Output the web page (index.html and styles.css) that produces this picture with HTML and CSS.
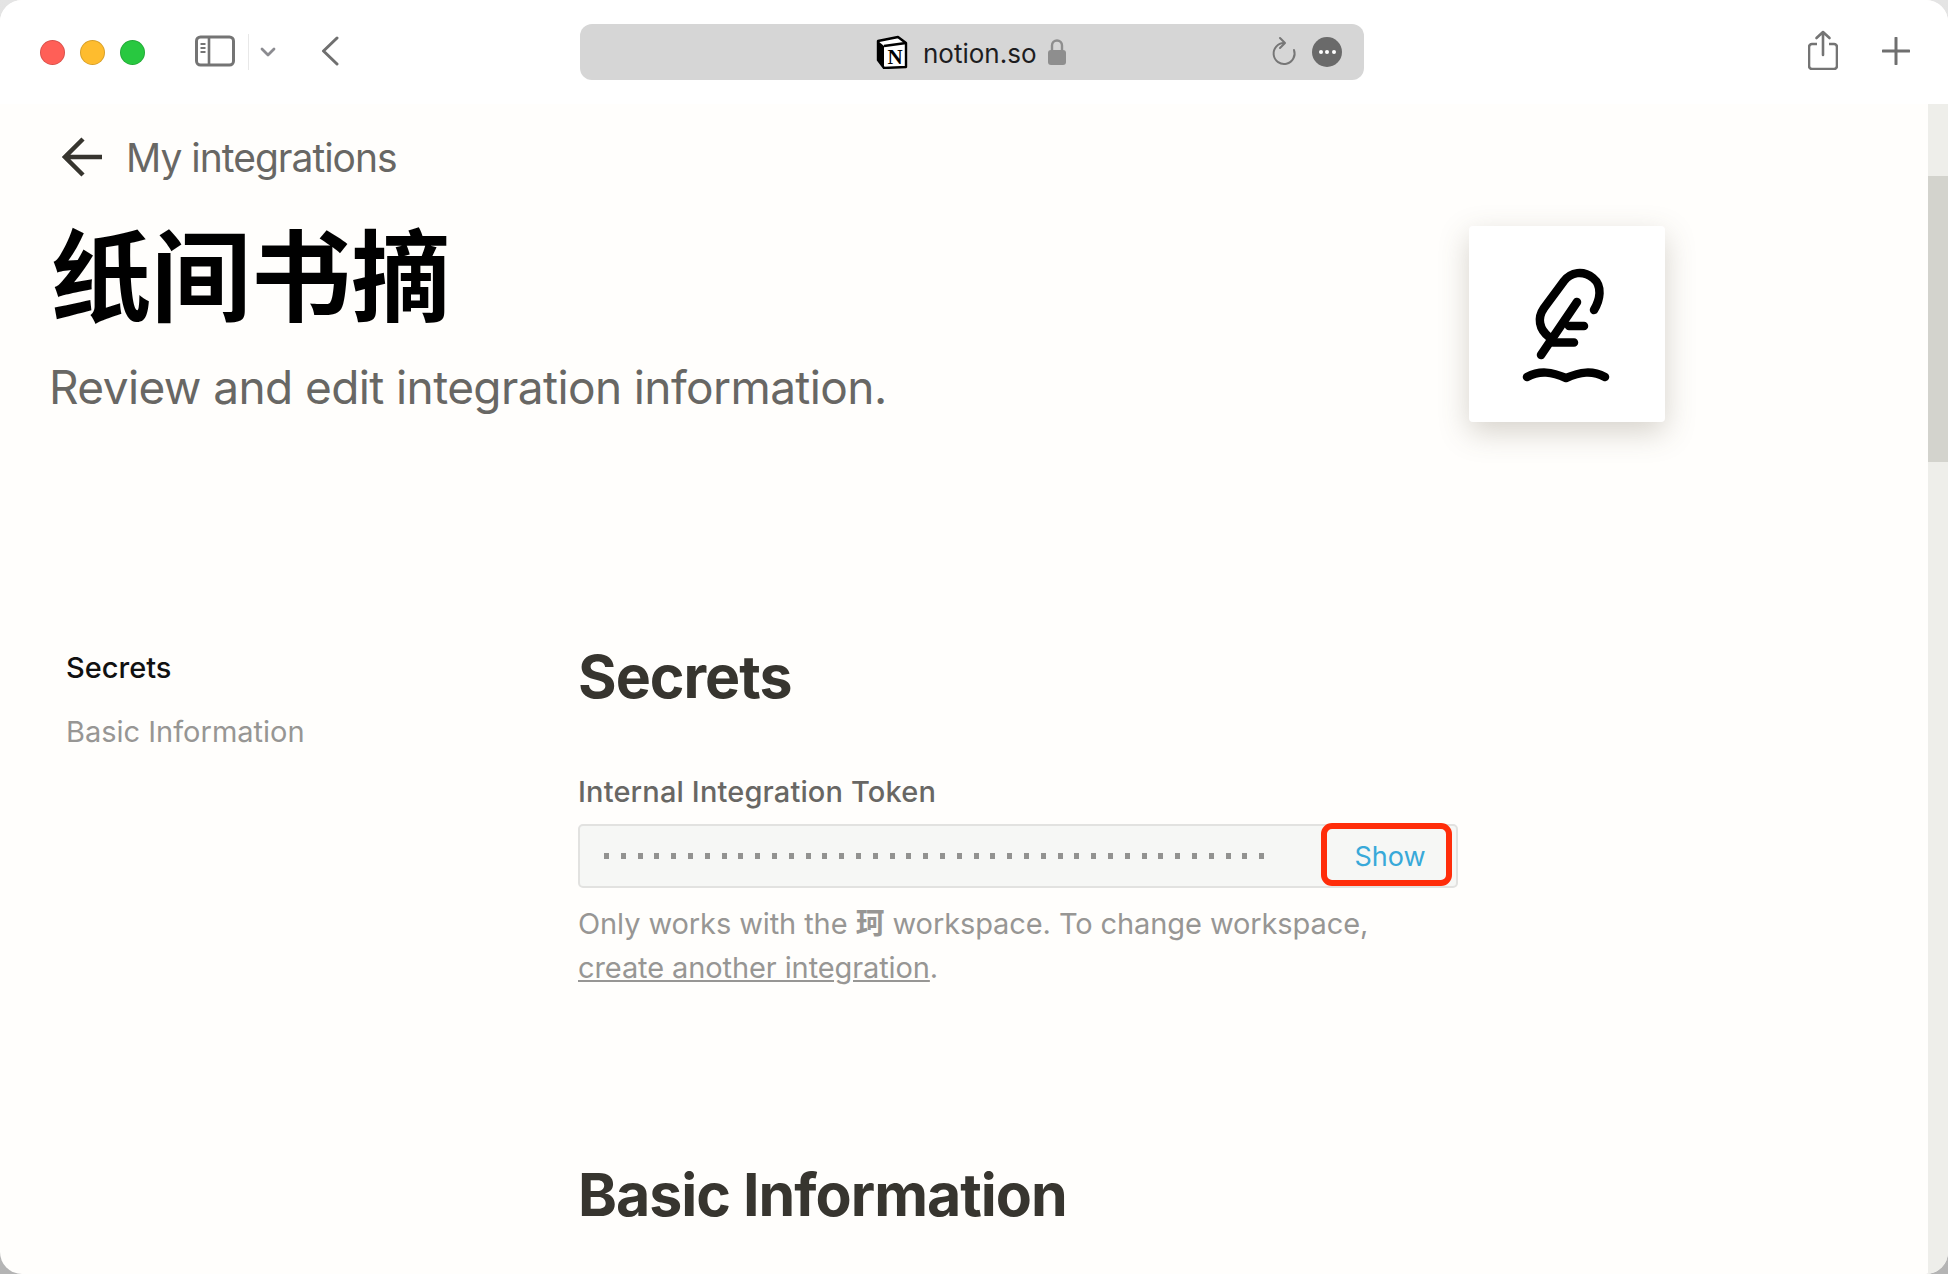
FILE: index.html
```html
<!DOCTYPE html>
<html lang="en">
<head>
  <meta charset="UTF-8" />
  <title>纸间书摘 - notion.so</title>
  <link rel="stylesheet" href="styles.css">
</head>
<body>
  <div class="window">
    <header class="toolbar">
      <div class="lights">
        <span class="light red"></span>
        <span class="light yellow"></span>
        <span class="light green"></span>
      </div>
      <svg class="sidebar-icon" viewBox="0 0 40 32" width="40" height="32">
        <rect x="1.500" y="2" width="37" height="28" rx="4" fill="none" stroke="#747474" stroke-width="3"/>
        <path d="M14 2v28" stroke="#747474" stroke-width="2.600"/>
        <path d="M5.500 9h5M5.500 13h5M5.500 17h5" stroke="#747474" stroke-width="2"/>
      </svg>
      <span class="divider"></span>
      <svg class="chevron-icon" viewBox="0 0 16 10" width="16" height="10">
        <path d="M2 2l6 6 6-6" fill="none" stroke="#8b8b90" stroke-width="2.800" stroke-linecap="round" stroke-linejoin="round"/>
      </svg>
      <svg class="back-icon" viewBox="0 0 18 30" width="18" height="30">
        <path d="M16 2L2.500 15 16 28" fill="none" stroke="#6f6f6f" stroke-width="3" stroke-linecap="round" stroke-linejoin="round"/>
      </svg>

      <div class="url-bar">
        <div class="url-center">
          <svg class="notion-logo" viewBox="0 0 32 34" width="32" height="34">
            <path d="M2 6l20-4 8 6v24l-22 1-6-8z" fill="#fff" stroke="#000" stroke-width="2.400" stroke-linejoin="round"/>
            <path d="M2 6l6 5v22l-6-8z" fill="#000"/>
            <path d="M8 11l22-3" stroke="#000" stroke-width="2.400"/>
            <text x="19" y="29" class="notion-n">N</text>
          </svg>
          <span class="url-text">notion.so</span>
          <svg class="lock-icon" viewBox="0 0 20 28" width="20" height="28">
            <path d="M5 13V7.500a5 5 0 0 1 10 0V13" fill="none" stroke="#8e8e8e" stroke-width="2.400"/>
            <rect x="1" y="12" width="18" height="15" rx="3" fill="#8e8e8e"/>
          </svg>
        </div>
        <svg class="reload-icon" viewBox="0 0 26 32" width="26" height="32">
          <path d="M13 7a10.500 10.500 0 1 0 10 7" fill="none" stroke="#767676" stroke-width="2" stroke-linecap="round"/>
          <path d="M9 2l5 5-5 5" fill="none" stroke="#767676" stroke-width="2" stroke-linecap="round" stroke-linejoin="round"/>
        </svg>
        <span class="more-btn"><i></i><i></i><i></i></span>
      </div>

      <svg class="share-icon" viewBox="0 0 30 40" width="30" height="40">
        <path d="M9 14H4a3 3 0 0 0-3 3v19a3 3 0 0 0 3 3h22a3 3 0 0 0 3-3V17a3 3 0 0 0-3-3h-5" fill="none" stroke="#747474" stroke-width="2.600"/>
        <path d="M15 25V2M8.500 8L15 2l6.500 6" fill="none" stroke="#747474" stroke-width="2.600" stroke-linecap="round" stroke-linejoin="round"/>
      </svg>
      <svg class="plus-icon" viewBox="0 0 28 28" width="28" height="28">
        <path d="M14 1v26M1 14h26" stroke="#6f6f6f" stroke-width="3" stroke-linecap="round"/>
      </svg>
    </header>

    <div class="page">
      <main class="content">
        <a class="back-link" href="#">
          <svg viewBox="0 0 42 42" width="42" height="42">
            <path d="M40 21H4M21 3L3 21l18 18" fill="none" stroke="#37352f" stroke-width="4.500"/>
          </svg>
          <span>My integrations</span>
        </a>

        <div class="hero">
          <div class="hero-text">
            <h1>纸间书摘</h1>
            <p>Review and edit integration information.</p>
          </div>
          <div class="app-icon">
            <svg viewBox="0 0 196 196" width="196" height="196">
              <g fill="none" stroke="#000" stroke-width="8.500" stroke-linecap="round" stroke-linejoin="round">
                <path d="M125 84C131 74 134 60 124 52C114 44 102 46 95 55L75 82C68 92 70 103 80 111"/>
                <path d="M108 76L72 129"/>
                <path d="M100 100H115M84 116.500H105"/>
                <path d="M58 151C71 144 83 146 97 152C111 146 123 144 136 151"/>
              </g>
            </svg>
          </div>
        </div>

        <div class="columns">
          <nav class="side-nav">
            <a class="active" href="#">Secrets</a>
            <a href="#">Basic Information</a>
          </nav>
          <div class="sections">
            <section class="secrets">
              <h2>Secrets</h2>
              <label>Internal Integration Token</label>
              <div class="token-field">
                <div class="token-dots"></div>
                <button class="show-btn">Show</button>
              </div>
              <p class="hint">Only works with the <b class="cjk">珂</b> workspace. To change workspace,<br><a href="#">create another integration</a>.</p>
            </section>
            <section>
              <h2>Basic Information</h2>
            </section>
          </div>
        </div>
      </main>
      <div class="scrollbar"><div class="thumb"></div></div>
    </div>
  </div>
</body>
</html>
```

FILE: styles.css
```css
:root {
  --page-bg: #fffefc;
  --text-dark: #37352f;
  --text-mid: #686764;
  --text-light: #979694;
}

* {
  margin: 0;
  padding: 0;
  box-sizing: border-box;
}

html, body {
  height: 100%;
  overflow: hidden;
}

body {
  font-family: Inter, "Noto Sans CJK SC", sans-serif;
  background: linear-gradient(#e4e4e4, #b4b4b4);
  color: var(--text-dark);
}

a {
  color: inherit;
}

.window {
  height: 100%;
  display: flex;
  flex-direction: column;
  background-color: var(--page-bg);
  border-radius: 22px;
  overflow: hidden;
}

/* Barre du navigateur */
.toolbar {
  height: 104px;
  flex-shrink: 0;
  display: flex;
  align-items: center;
  background-color: #fff;
  padding-left: 39.500px;
}

.lights {
  display: flex;
  gap: 15px;
}

.light {
  width: 25px;
  height: 25px;
  border-radius: 50%;
  border: 1px solid rgba(0, 0, 0, 0.15);
}

.red { background-color: #ff5f57; }
.yellow { background-color: #febc2e; }
.green { background-color: #28c840; }

.sidebar-icon {
  margin-left: 50.500px;
  margin-top: -2px;
}

.divider {
  width: 1px;
  height: 36px;
  margin-left: 13px;
  background-color: #e8e8e8;
}

.chevron-icon {
  margin-left: 11px;
}

.back-icon {
  margin-left: 45px;
  margin-top: -2px;
}

.url-bar {
  width: 784px;
  height: 56px;
  margin-left: 241px;
  display: flex;
  align-items: center;
  position: relative;
  background-color: #d6d6d6;
  border-radius: 12px;
}

.url-center {
  display: flex;
  align-items: center;
  margin-left: 296px;
}

.notion-n {
  font-family: "Liberation Serif", serif;
  font-size: 21px;
  font-weight: bold;
  text-anchor: middle;
}

.url-text {
  font-size: 26px;
  line-height: 30px;
  padding-top: 4px;
  color: #1d1d1f;
  margin-left: 15px;
}

.lock-icon {
  margin-left: 10px;
}

.reload-icon {
  margin-left: auto;
}

.more-btn {
  width: 30px;
  height: 30px;
  margin: 0 22px 0 15px;
  display: flex;
  align-items: center;
  justify-content: center;
  gap: 2.500px;
  border-radius: 50%;
  background-color: #6a6a6a;
}

.more-btn i {
  width: 4px;
  height: 4px;
  border-radius: 50%;
  background-color: #fff;
}

.share-icon {
  margin-left: 444px;
  margin-top: -4px;
}

.plus-icon {
  margin-left: 44px;
  margin-top: -2px;
}

/* Contenu */
.page {
  flex: 1;
  display: flex;
  min-height: 0;
}

.content {
  flex: 1;
  padding: 29px 0 0 50px;
  overflow: hidden;
}

.scrollbar {
  width: 20px;
  padding-top: 72px;
  background-color: #eeeeea;
}

.thumb {
  height: 286px;
  background-color: #d3d3cd;
}

.back-link {
  display: flex;
  align-items: center;
  gap: 22px;
  height: 48px;
  margin-left: 12px;
  font-size: 39px;
  letter-spacing: -1px;
  color: var(--text-mid);
  text-decoration: none;
}

.hero {
  display: flex;
  margin-top: 45px;
}

.hero-text {
  width: 1419px;
}

.hero-text h1 {
  font-family: "Noto Sans CJK SC", sans-serif;
  font-size: 100px;
  font-weight: 700;
  line-height: 100px;
  color: #000;
  margin: -5px 0 0 1px;
}

.hero-text p {
  font-size: 46px;
  letter-spacing: -0.6px;
  line-height: 56px;
  margin: 38px 0 0 -1px;
  color: var(--text-mid);
}

.app-icon {
  width: 196px;
  height: 196px;
  background-color: #fff;
  border-radius: 4px;
  box-shadow: 0 10px 30px rgba(90, 80, 60, 0.25);
}

.columns {
  display: flex;
  margin-top: 211px;
}

.side-nav {
  width: 528px;
  padding: 17px 0 0 16px;
  display: flex;
  flex-direction: column;
  gap: 29px;
  font-size: 29px;
  line-height: 35px;
}

.side-nav a {
  color: var(--text-light);
  text-decoration: none;
}

.side-nav a.active {
  color: #111;
  font-weight: 500;
}

.sections {
  padding-top: 9px;
}

.sections h2 {
  font-size: 59px;
  font-weight: 700;
  letter-spacing: -1px;
  line-height: 70px;
  color: var(--text-dark);
}

.secrets {
  margin-bottom: 170px;
}

.secrets label {
  display: block;
  margin-top: 62px;
  font-size: 29px;
  font-weight: 500;
  letter-spacing: 0.15px;
  line-height: 36px;
  color: var(--text-mid);
}

.token-field {
  width: 880px;
  height: 64px;
  margin-top: 14px;
  display: flex;
  align-items: center;
  background-color: #f6f7f5;
  border: 2px solid #e2e2e0;
  border-radius: 5px;
  position: relative;
}

.token-dots {
  width: 668px;
  height: 6px;
  margin-left: 24px;
  background-image: repeating-linear-gradient(90deg, #929290 0 5px, transparent 5px 16.800px);
}

.show-btn {
  position: absolute;
  right: 4px;
  top: -3px;
  width: 131px;
  height: 63px;
  padding: 3px 0 0 7px;
  font-family: inherit;
  font-size: 27px;
  color: #38a9d9;
  background-color: transparent;
  border: 6px solid #ff2d0a;
  border-radius: 11px;
}

.hint {
  margin-top: 11px;
  font-size: 29px;
  letter-spacing: -0.1px;
  line-height: 44px;
  color: var(--text-light);
}

.cjk {
  font-family: "Noto Sans CJK SC", sans-serif;
}
```
